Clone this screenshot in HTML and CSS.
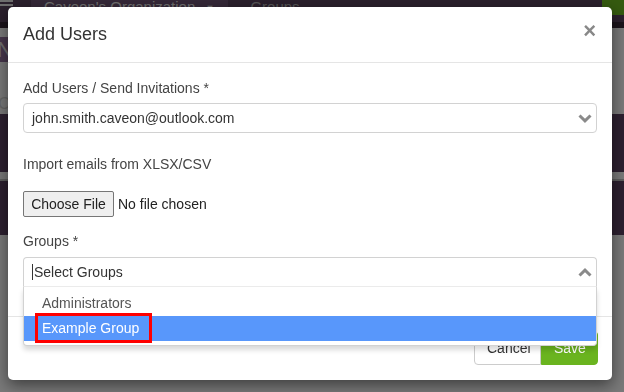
FILE: index.html
```html
<!DOCTYPE html>
<html lang="en">
<head>
    <meta charset="UTF-8">
    <meta name="viewport" content="width=device-width, initial-scale=1.0">
    <title>Add Users</title>
    <link rel="stylesheet" href="styles.css">
</head>
<body>
    <!-- Page behind the modal -->
    <div class="page">
        <header class="topbar">
            <span class="menu-icon"><i></i><i></i></span>
            <a class="org-switch">Caveon's Organization <span class="caret">&#9660;</span></a>
            <a class="nav-link">Groups</a>
            <span class="notify"></span>
        </header>
        <div class="subbar"></div>
        <main class="content">
            <div class="page-title">New</div>
            <div class="search-row">Contents</div>
            <div class="table-head"></div>
            <div class="table-head second"></div>
        </main>
    </div>

    <!-- Add Users Modal -->
    <div class="backdrop">
        <div class="modal">
            <div class="modal-header">
                <h4 class="modal-title">Add Users</h4>
                <span class="close">&times;</span>
            </div>

            <div class="modal-body">
                <div class="field field-emails">
                    <label>Add Users / Send Invitations *</label>
                    <div class="select-box">
                        <span class="select-value">john.smith.caveon@outlook.com</span>
                        <svg class="chevron" width="14" height="9" viewBox="0 0 14 9">
                            <polyline points="1.5,1.5 7,6.8 12.5,1.5" fill="none" stroke="#8a8a8a" stroke-width="3"/>
                        </svg>
                    </div>
                </div>

                <div class="field field-import">
                    <label class="label-spaced">Import emails from XLSX/CSV</label>
                    <div class="file-row">
                        <button type="button" class="file-btn">Choose File</button>
                        <span class="file-name">No file chosen</span>
                    </div>
                </div>

                <div class="field field-groups">
                    <label class="label-groups">Groups *</label>
                    <div class="select-box is-open">
                        <span class="text-caret"></span>
                        <span class="select-value">Select Groups</span>
                        <svg class="chevron" width="14" height="9" viewBox="0 0 14 9">
                            <polyline points="1.5,7.5 7,2.2 12.5,7.5" fill="none" stroke="#8a8a8a" stroke-width="3"/>
                        </svg>
                        <ul class="dropdown">
                            <li class="option">Administrators</li>
                            <li class="option is-active">Example Group<span class="callout"></span></li>
                        </ul>
                    </div>
                </div>
            </div>

            <div class="modal-footer">
                <div class="btn-group">
                    <button type="button" class="btn btn-cancel">Cancel</button>
                    <button type="button" class="btn btn-save">Save</button>
                </div>
            </div>
        </div>
    </div>
</body>
</html>
```

FILE: styles.css
```css
/* General */
html, body {
    margin: 0;
    padding: 0;
    height: 100%;
    overflow: hidden;
}
body {
    font-family: "Liberation Sans", Arial, sans-serif;
    background-color: #f2f2f2;
    color: #333;
}

/* Page behind the modal */
.topbar {
    height: 22px;
    background-color: #56405a;
    display: flex;
    align-items: flex-start;
    overflow: hidden;
}
.menu-icon {
    width: 13px;
    display: flex;
    flex-direction: column;
    gap: 2px;
}
.menu-icon i {
    display: block;
    height: 2px;
    background-color: #ddd;
}
.org-switch {
    margin-left: 18px;
    padding: 0 14px 0 13px;
    height: 22px;
    background-color: #6a5170;
    color: #ddd;
    font-size: 15px;
    line-height: 14px;
    white-space: nowrap;
}
.org-switch .caret {
    font-size: 9px;
    vertical-align: middle;
    margin-left: 6px;
}
.nav-link {
    margin-left: 22px;
    color: #aaa;
    font-size: 15px;
    line-height: 14px;
    white-space: nowrap;
}
.notify {
    margin-left: auto;
    width: 22px;
    height: 15px;
    background-color: #6ab41f;
}
.subbar {
    height: 6px;
    background-color: #362836;
}
.content {
    padding-top: 9px;
}
.page-title {
    width: 90px;
    height: 25px;
    margin-left: -3px;
    background-color: #8e6e98;
    color: #ddd;
    font-size: 22px;
    line-height: 25px;
}
.search-row {
    height: 52px;
    color: #ccc;
    font-size: 17px;
    line-height: 84px;
    margin-left: -2px;
}
.table-head {
    height: 58px;
    background-color: #5a4060;
}
.table-head.second {
    margin-top: 7px;
    height: 54px;
    border-top: 2px solid #bbb;
}

/* Modal */
.backdrop {
    position: fixed;
    left: 0;
    top: 0;
    right: 0;
    bottom: 0;
    background-color: rgba(0, 0, 0, 0.5);
    padding: 7px 12px 0 8px;
}
.modal {
    background-color: #fff;
    border-radius: 5px;
    box-shadow: 0 5px 15px rgba(0, 0, 0, 0.5);
}
.modal-header {
    display: flex;
    justify-content: space-between;
    align-items: flex-start;
    padding: 15px;
    border-bottom: 1px solid #e5e5e5;
}
.modal-title {
    margin: 0;
    font-size: 18px;
    font-weight: normal;
    line-height: 25px;
    color: #333;
}
.close {
    font-size: 22px;
    font-weight: bold;
    line-height: 18px;
    color: #888;
    margin-right: 1px;
}

.modal-body {
    padding: 15px 15px 29px;
}
.field label {
    display: block;
    font-size: 14px;
    line-height: 20px;
    color: #444;
    margin-bottom: 5px;
}
.field-emails {
    margin-bottom: 21px;
}
.field-import {
    margin-bottom: 14px;
}
.field label.label-spaced {
    margin-bottom: 17px;
}
.field label.label-groups {
    margin-bottom: 6px;
}

/* Select2 style box */
.select-box {
    position: relative;
    display: flex;
    align-items: center;
    height: 30px;
    box-sizing: border-box;
    border: 1px solid #d2d2d2;
    border-radius: 4px;
    padding-left: 8px;
    font-size: 14px;
    color: #333;
}
.select-value {
    line-height: 28px;
}
.chevron {
    margin-left: auto;
    margin-right: 4px;
}
.select-box.is-open {
    border-bottom-color: #ececec;
    border-bottom-left-radius: 0;
    border-bottom-right-radius: 0;
}
.text-caret {
    width: 1px;
    height: 16px;
    background-color: #333;
    margin-right: 1px;
}
.dropdown {
    position: absolute;
    top: 100%;
    left: -1px;
    right: -1px;
    margin: 1px 0 0;
    padding: 4px 0;
    list-style: none;
    background-color: #fff;
    border: 1px solid #d2d2d2;
    border-top: none;
    border-radius: 0 0 4px 4px;
    box-shadow: 0 4px 5px rgba(0, 0, 0, 0.15);
    z-index: 2;
}
.option {
    position: relative;
    height: 25px;
    line-height: 25px;
    padding-left: 18px;
    color: #555;
}
.option.is-active {
    background-color: #5897fb;
    color: #fff;
}
.callout {
    position: absolute;
    left: 11px;
    top: -3px;
    width: 117px;
    height: 30px;
    box-sizing: border-box;
    border: 3px solid #f00;
}

/* File input */
.file-row {
    display: flex;
    align-items: center;
    height: 26px;
    font-size: 14px;
}
.file-btn {
    height: 26px;
    width: 91px;
    padding: 0;
    font-family: "Liberation Sans", Arial, sans-serif;
    font-size: 14px;
    color: #222;
    background-color: #efefef;
    border: 1px solid #767676;
    border-radius: 2px;
}
.file-name {
    margin-left: 4px;
    color: #222;
}

/* Footer */
.modal-footer {
    display: flex;
    justify-content: flex-end;
    padding: 14px 14px 15px 15px;
    border-top: 1px solid #e5e5e5;
}
.btn-group {
    display: flex;
}
.btn {
    height: 34px;
    padding: 6px 12px;
    font-family: "Liberation Sans", Arial, sans-serif;
    font-size: 14px;
    line-height: 20px;
    border: 1px solid #ccc;
    cursor: pointer;
}
.btn-cancel {
    width: 67px;
    background-color: #fff;
    color: #333;
    border-radius: 4px 0 0 4px;
}
.btn-save {
    width: 57px;
    background-color: #6ab41f;
    border-color: #6ab41f;
    color: #fff;
    border-radius: 0 4px 4px 0;
}
```
